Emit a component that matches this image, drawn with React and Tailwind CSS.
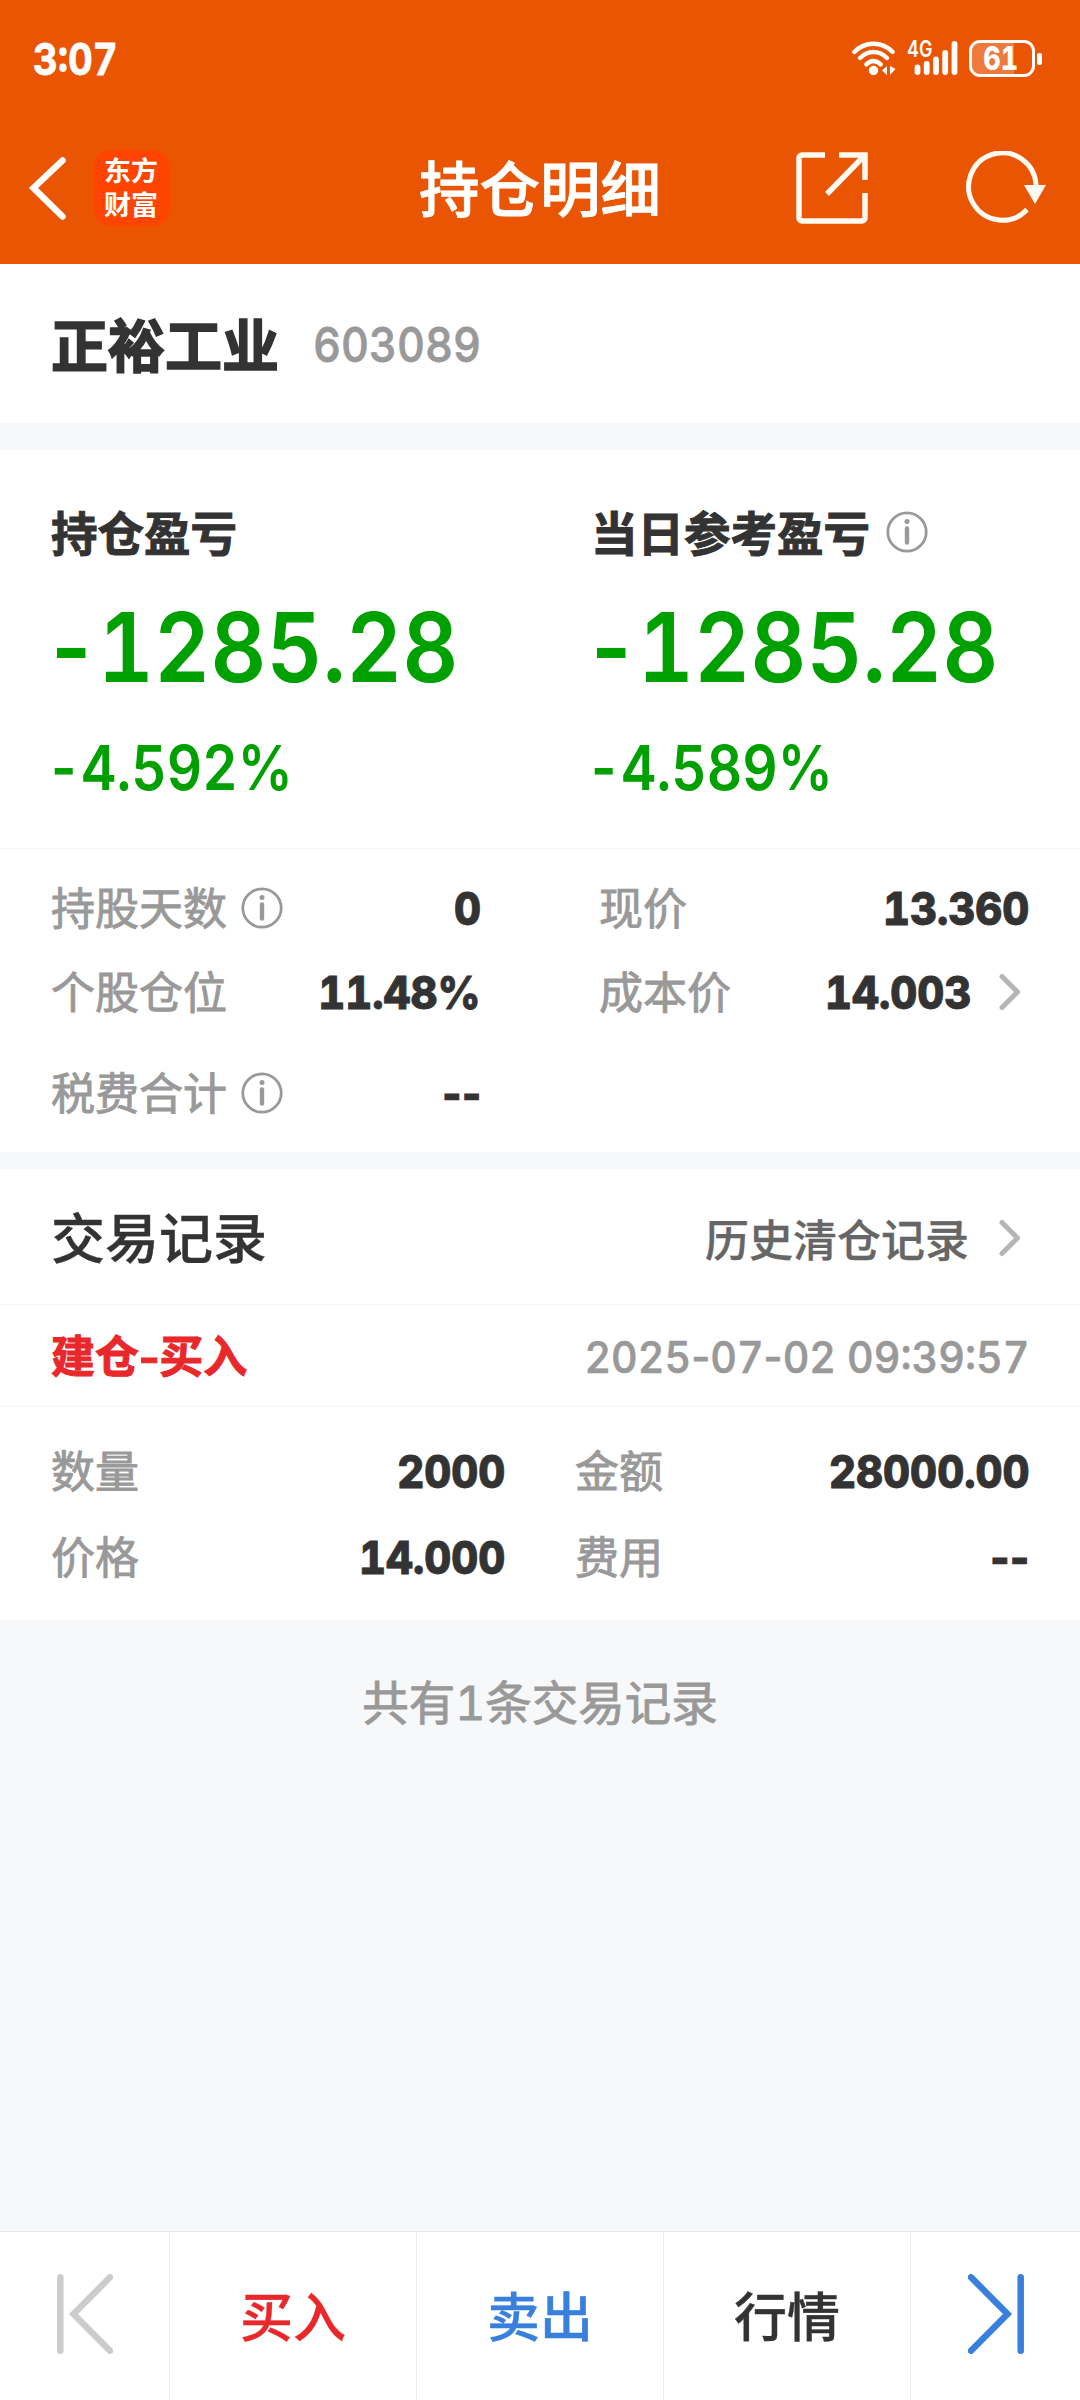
import React from 'react';

const positionLeft = [
    { label: '持股天数', value: '0', info: true },
    { label: '个股仓位', value: '11.48%' },
];

const positionRight = [
    { label: '现价', value: '13.360' },
    { label: '成本价', value: '14.003', more: true },
];

// Digits are tabular and slightly condensed, hyphens keep their natural width
function Num({ children, className = '' }) {
    return (
        <span className={`inline-block whitespace-nowrap leading-none font-['Inter',sans-serif] ${className}`}>
            {children.split(/(-+)/).filter(Boolean).map((part, i) => (
                <span key={i} className={part.startsWith('-') ? 'proportional-nums' : 'tabular-nums'}>{part}</span>
            ))}
        </span>
    );
}

function Zh({ children, className = '' }) {
    return <span className={`block whitespace-nowrap leading-none ${className}`}>{children}</span>;
}

function Value({ children }) {
    return <Num className="origin-right scale-x-[0.93] text-[45px] font-extrabold text-[#333] [-webkit-text-stroke:0.8px_currentColor]">{children}</Num>;
}

function InfoIcon({ className = '' }) {
    return (
        <svg viewBox="0 0 42 42" className={`w-[42px] h-[42px] shrink-0 ${className}`} fill="none" stroke="#999">
            <circle cx="21" cy="21" r="19.2" strokeWidth="2.8" />
            <path d="M21 17.5v14" strokeWidth="4.4" strokeLinecap="round" />
            <circle cx="21" cy="10.5" r="2.5" fill="#999" stroke="none" />
        </svg>
    );
}

function MoreIcon() {
    return (
        <svg viewBox="0 0 22 38" className="w-[22px] h-[38px] shrink-0" fill="none" stroke="#b5b5b5" strokeWidth="5" strokeLinecap="round" strokeLinejoin="round">
            <path d="M3 3.5 18.5 19 3 34.5" />
        </svg>
    );
}

function StatusBar() {
    return (
        <div className="h-[114px] pl-[33px] pr-[38px] pt-[3px] flex items-center justify-between">
            <Num className="origin-left scale-x-[0.87] text-[44px] font-bold [-webkit-text-stroke:0.8px_currentColor]">3:07</Num>
            <div className="flex items-center">
                {/* Wifi */}
                <svg viewBox="0 0 46 36" className="w-[46px] h-[36px] mt-[-1px]" fill="none" stroke="#fff" strokeWidth="4.4" strokeLinecap="round">
                    <path d="M3.3 12C14 1 31 1 41.7 12" />
                    <path d="M9 18C17 10 28 10 36 18" />
                    <path d="M15.3 24.3C20 20 25 20 29.7 24.3" />
                    <circle cx="22.5" cy="30.5" r="4.7" fill="#fff" stroke="none" />
                    <path d="M36 26v9l-5-4.5zM39 26v9l5.5-6z" fill="#fff" stroke="none" />
                </svg>
                {/* Mobile signal */}
                <div className="relative ml-[11px] w-[52px] h-[36px] mt-[-1px]">
                    <span className="absolute -left-[1px] -top-[2px] text-[23px] leading-none font-semibold font-['Inter',sans-serif] origin-left scale-x-[0.78]">4G</span>
                    <svg viewBox="0 0 52 36" className="w-[52px] h-[36px]" stroke="#fff" strokeWidth="5.8" strokeLinecap="round">
                        <path d="M9.5 27.5v4.5M18.7 24v8M28 19.5V32M37.2 13v19M46.5 4v28" />
                    </svg>
                </div>
                {/* Battery */}
                <div className="relative ml-[9px] w-[66px] h-[37px] rounded-[11px] border-[3px] border-white overflow-hidden flex items-center justify-center">
                    <div className="absolute inset-y-0 left-0 w-[42px] bg-white/22"></div>
                    <Num className="relative right-[1px] scale-x-[0.84] text-[32px] font-extrabold">61</Num>
                </div>
                <div className="ml-[2px] w-[5px] h-[12px] rounded-[2px] bg-white"></div>
            </div>
        </div>
    );
}

function TitleBar() {
    return (
        <div className="h-[150px] pl-[28px] pr-[33px] grid grid-cols-[1fr_auto_1fr] items-center">
            <div className="flex items-center">
                <svg viewBox="0 0 40 66" className="w-[40px] h-[66px] mt-[-2px]" fill="none" stroke="#fff" strokeWidth="6.5" strokeLinecap="round">
                    <path d="M34.5 5.5 5.5 33 34.5 61.5" />
                </svg>
                <div className="ml-[26px] w-[75px] h-[76px] mt-[-2px] rounded-[16px] bg-[#ff4400] flex items-center justify-center text-[27px] leading-[34px] font-bold pb-[3px] pr-[1px]">
                    <span>东方<br />财富</span>
                </div>
            </div>
            <Zh className="ml-[5px] text-[60.5px] font-medium mt-[-5px] [-webkit-text-stroke:0.8px_currentColor]">持仓明细</Zh>
            <div className="flex items-center justify-end -mt-[2px]">
                <svg viewBox="0 0 72 72" className="w-[72px] h-[72px] mr-[97px]" fill="none" stroke="#fffaf2" strokeWidth="5.5">
                    <path d="M29 3H6a3 3 0 0 0-3 3v60a3 3 0 0 0 3 3h60a3 3 0 0 0 3-3V41" />
                    <path d="M43 3h26v25M68 4 31 42" />
                </svg>
                <svg viewBox="0 0 82 74" className="w-[82px] h-[74px]" fill="none" stroke="#fffaf2" strokeWidth="5">
                    <path d="M62 58.5A33.7 33.7 0 1 1 71 34" />
                    <path d="M59 34h22L70 53z" fill="#fffaf2" stroke="none" />
                </svg>
            </div>
        </div>
    );
}

function ProfitBlock({ title, amount, percent, info }) {
    return (
        <div className="w-1/2 pl-[51px]">
            <div className="h-[42px] flex items-center">
                <Zh className="-mt-[2px] text-[46.5px] font-bold text-[#333] [-webkit-text-stroke:1px_currentColor]">{title}</Zh>
                {info && <InfoIcon className="ml-[16px]" />}
            </div>
            <div className="mt-[45px] h-[98px] flex items-center">
                <Num className="origin-left scale-x-[0.905] text-[96px] font-semibold [&>span:first-child]:mr-[7px]">{amount}</Num>
            </div>
            <div className="mt-[41px] h-[62px] flex items-center">
                <Num className="origin-left scale-x-[0.885] text-[62px] font-semibold [&>span:first-child]:mr-[5px]">{percent}</Num>
            </div>
        </div>
    );
}

function Row({ label, value, info, more, className = '' }) {
    return (
        <div className={`flex items-center justify-between ${className}`}>
            <div className="flex items-center">
                <Zh className="-mt-[4px] text-[44px] text-[#999] [-webkit-text-stroke:0.9px_currentColor]">{label}</Zh>
                {info && <InfoIcon className="ml-[14px]" />}
            </div>
            <div className="flex items-center">
                <Value>{value}</Value>
                {more && <div className="ml-[28px] mr-[8px]"><MoreIcon /></div>}
            </div>
        </div>
    );
}

function BottomBar() {
    return (
        <div className="h-[169px] border-t border-[#e6e8ea] bg-white grid grid-cols-[170px_247px_247px_247px_169px] divide-x divide-[#e9ebed] text-[53px] font-medium [-webkit-text-stroke:0.4px_currentColor]">
            <div className="flex items-center justify-center">
                <svg viewBox="0 0 56 80" className="w-[56px] h-[80px] -mt-[4px]" fill="none" stroke="#ccc" strokeWidth="6.5" strokeLinecap="round">
                    <path d="M3.3 3.3v73.4M53 3.3 16.5 40 53 76.7" />
                </svg>
            </div>
            <div className="pb-[3px] flex items-center justify-center text-[#e8282a]"><Zh>买入</Zh></div>
            <div className="pb-[3px] flex items-center justify-center text-[#3880dc]"><Zh>卖出</Zh></div>
            <div className="pb-[3px] flex items-center justify-center text-[#333]"><Zh>行情</Zh></div>
            <div className="flex items-center justify-center">
                <svg viewBox="0 0 56 80" className="w-[56px] h-[80px] -mt-[4px]" fill="none" stroke="#3880dc" strokeWidth="6.5" strokeLinecap="round">
                    <path d="M52.7 3.3v73.4M3 3.3 39.5 40 3 76.7" />
                </svg>
            </div>
        </div>
    );
}

export default function App() {
    return (
        <div className="w-[1080px] h-[2400px] flex flex-col overflow-hidden bg-[#f7f8fa] font-['Noto_Sans_CJK_SC',sans-serif]">
            <header className="h-[264px] bg-[#ea5504] text-white">
                <StatusBar />
                <TitleBar />
            </header>

            {/* Stock name */}
            <section className="h-[159px] pl-[51px] flex items-center bg-white">
                <Zh className="-mt-[3px] text-[57px] font-bold text-[#333] [-webkit-text-stroke:1.6px_currentColor]">正裕工业</Zh>
                <Num className="ml-[34px] mt-[3px] origin-left scale-x-[0.9] text-[48px] font-medium text-[#999] [-webkit-text-stroke:0.8px_currentColor]">603089</Num>
            </section>

            {/* Profit and loss */}
            <section className="mt-[27px] h-[398px] pt-[61px] flex bg-white text-[#00a000]">
                <ProfitBlock title="持仓盈亏" amount="-1285.28" percent="-4.592%" />
                <ProfitBlock title="当日参考盈亏" amount="-1285.28" percent="-4.589%" info />
            </section>

            {/* Position details */}
            <section className="h-[304px] border-t border-[#f3f4f6] pt-[17px] pl-[51px] pr-[51px] bg-white">
                <div className="flex justify-between">
                    <div className="w-[430px]">
                        {positionLeft.map((item) => <Row key={item.label} {...item} className="h-[84px]" />)}
                    </div>
                    <div className="w-[430px]">
                        {positionRight.map((item) => <Row key={item.label} {...item} className="h-[84px]" />)}
                    </div>
                </div>
                <Row label="税费合计" value="--" info className="w-[430px] h-[118px]" />
            </section>

            {/* Trade records */}
            <section className="mt-[17px] h-[451px] bg-white">
                <div className="h-[135px] px-[52px] pt-[3px] flex items-center justify-between">
                    <Zh className="-ml-[1px] -mt-[4px] text-[54px] font-medium text-[#333] [-webkit-text-stroke:0.4px_currentColor]">交易记录</Zh>
                    <div className="flex items-center">
                        <Zh className="-mt-[1px] text-[44px] font-medium text-[#666] [-webkit-text-stroke:0.3px_currentColor]">历史清仓记录</Zh>
                        <div className="ml-[30px] mr-[7px]"><MoreIcon /></div>
                    </div>
                </div>
                <div className="h-[103px] pl-[51px] pr-[51px] flex items-center justify-between border-y border-[#f3f4f6]">
                    <Zh className="-mt-[3px] text-[44px] font-bold text-[#e8282a] [-webkit-text-stroke:1px_currentColor]">建仓<span className="inline-block mx-[2px] scale-x-[1.25]">-</span>买入</Zh>
                    <Num className="mt-[2px] origin-right scale-x-[0.936] text-[44px] font-medium text-[#999] [-webkit-text-stroke:0.7px_currentColor]">2025-07-02 09:39:57</Num>
                </div>
                <div className="pt-[21px] px-[51px] grid grid-cols-[454px_454px] gap-x-[70px]">
                    <Row label="数量" value="2000" className="h-[86px]" />
                    <Row label="金额" value="28000.00" className="h-[86px]" />
                    <Row label="价格" value="14.000" className="h-[86px]" />
                    <Row label="费用" value="--" className="h-[86px]" />
                </div>
            </section>

            <div className="flex-1 pt-[57px] flex items-start justify-center text-[46.5px] text-[#999] [-webkit-text-stroke:0.9px_currentColor]">
                <Zh>共有<Num>1</Num>条交易记录</Zh>
            </div>

            <BottomBar />
        </div>
    );
}
